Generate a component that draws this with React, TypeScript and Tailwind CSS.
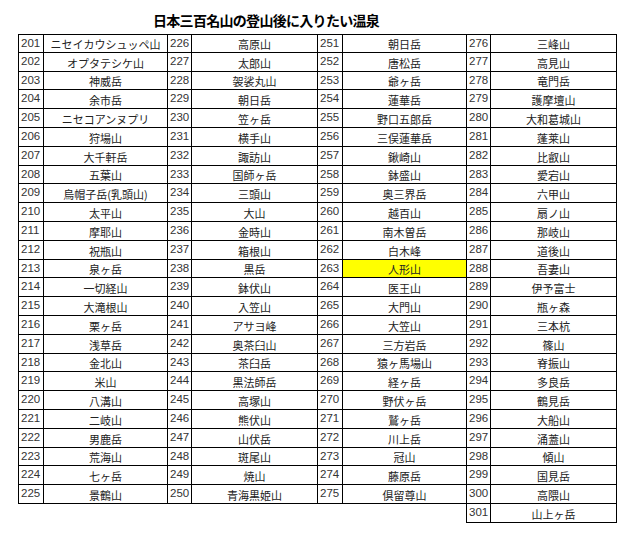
import React from "react";

const c1 = ["ニセイカウシュッペ山","オプタテシケ山","神威岳","余市岳","ニセコアンヌプリ","狩場山","大千軒岳","五葉山","烏帽子岳(乳頭山)","太平山","摩耶山","祝瓶山","泉ヶ岳","一切経山","大滝根山","栗ヶ岳","浅草岳","金北山","米山","八溝山","二岐山","男鹿岳","荒海山","七ヶ岳","景鶴山"];
const c2 = ["高原山","太郎山","袈裟丸山","朝日岳","笠ヶ岳","横手山","諏訪山","国師ヶ岳","三頭山","大山","金時山","箱根山","黒岳","鉢伏山","入笠山","アサヨ峰","奥茶臼山","茶臼岳","黒法師岳","高塚山","熊伏山","山伏岳","斑尾山","焼山","青海黒姫山"];
const c3 = ["朝日岳","唐松岳","爺ヶ岳","蓮華岳","野口五郎岳","三俣蓮華岳","鍬崎山","鉢盛山","奥三界岳","越百山","南木曽岳","白木峰","人形山","医王山","大門山","大笠山","三方岩岳","猿ヶ馬場山","経ヶ岳","野伏ヶ岳","鷲ヶ岳","川上岳","冠山","藤原岳","倶留尊山"];
const c4 = ["三峰山","高見山","竜門岳","護摩壇山","大和葛城山","蓬莱山","比叡山","愛宕山","六甲山","扇ノ山","那岐山","道後山","吾妻山","伊予富士","瓶ヶ森","三本杭","篠山","脊振山","多良岳","鶴見岳","大船山","涌蓋山","傾山","国見岳","高隈山","山上ヶ岳"];

const numCls = "border-r border-b border-black text-[11.5px] leading-[14px] pl-[2px] pt-[1px] text-[#333] [font-family:'Liberation_Sans',Arial,sans-serif]";
const nameCls = "border-r border-b border-black flex items-center justify-center pt-[2px] text-[11px] leading-[14px] text-[#222] [font-family:'Noto_Sans_CJK_JP',sans-serif]";

function Num({ n, first, top }: { n: number; first?: boolean; top?: boolean }) {
  return (
    <div className={numCls + (first ? " border-l" : "") + (top ? " border-t" : "")}>{n}</div>
  );
}
function Name({ t, top, hl }: { t: string; top?: boolean; hl?: boolean }) {
  return (
    <div className={nameCls + (top ? " border-t" : "") + (hl ? " bg-[#ffff00]" : "")}>{t}</div>
  );
}

export default function App() {
  const rows: React.ReactNode[] = [];
  for (let i = 0; i < 25; i++) {
    const top = i === 0;
    rows.push(
      <React.Fragment key={i}>
        <Num n={201 + i} first top={top} />
        <Name t={c1[i]} top={top} />
        <Num n={226 + i} top={top} />
        <Name t={c2[i]} top={top} />
        <Num n={251 + i} top={top} />
        <Name t={c3[i]} top={top} hl={i === 12} />
        <Num n={276 + i} top={top} />
        <Name t={c4[i]} top={top} />
      </React.Fragment>
    );
  }
  return (
    <div className="w-[624px] h-[533px] bg-white overflow-hidden">
      <div className="h-[34px] pl-[153px] pt-[10px]">
        <div className="text-[14px] leading-[20px] tracking-[-0.7px] font-bold text-black [font-family:'Noto_Sans_CJK_JP',sans-serif]">
          日本三百名山の登山後に入りたい温泉
        </div>
      </div>
      <div className="ml-[18px] grid grid-cols-[26px_124px_24px_126px_25px_124px_24px_126px] auto-rows-[18.8px]">
        {rows}
        <div className="col-span-5" />
        <div className="border-r border-black" />
        <Num n={301} />
        <Name t={c4[25]} />
      </div>
    </div>
  );
}
